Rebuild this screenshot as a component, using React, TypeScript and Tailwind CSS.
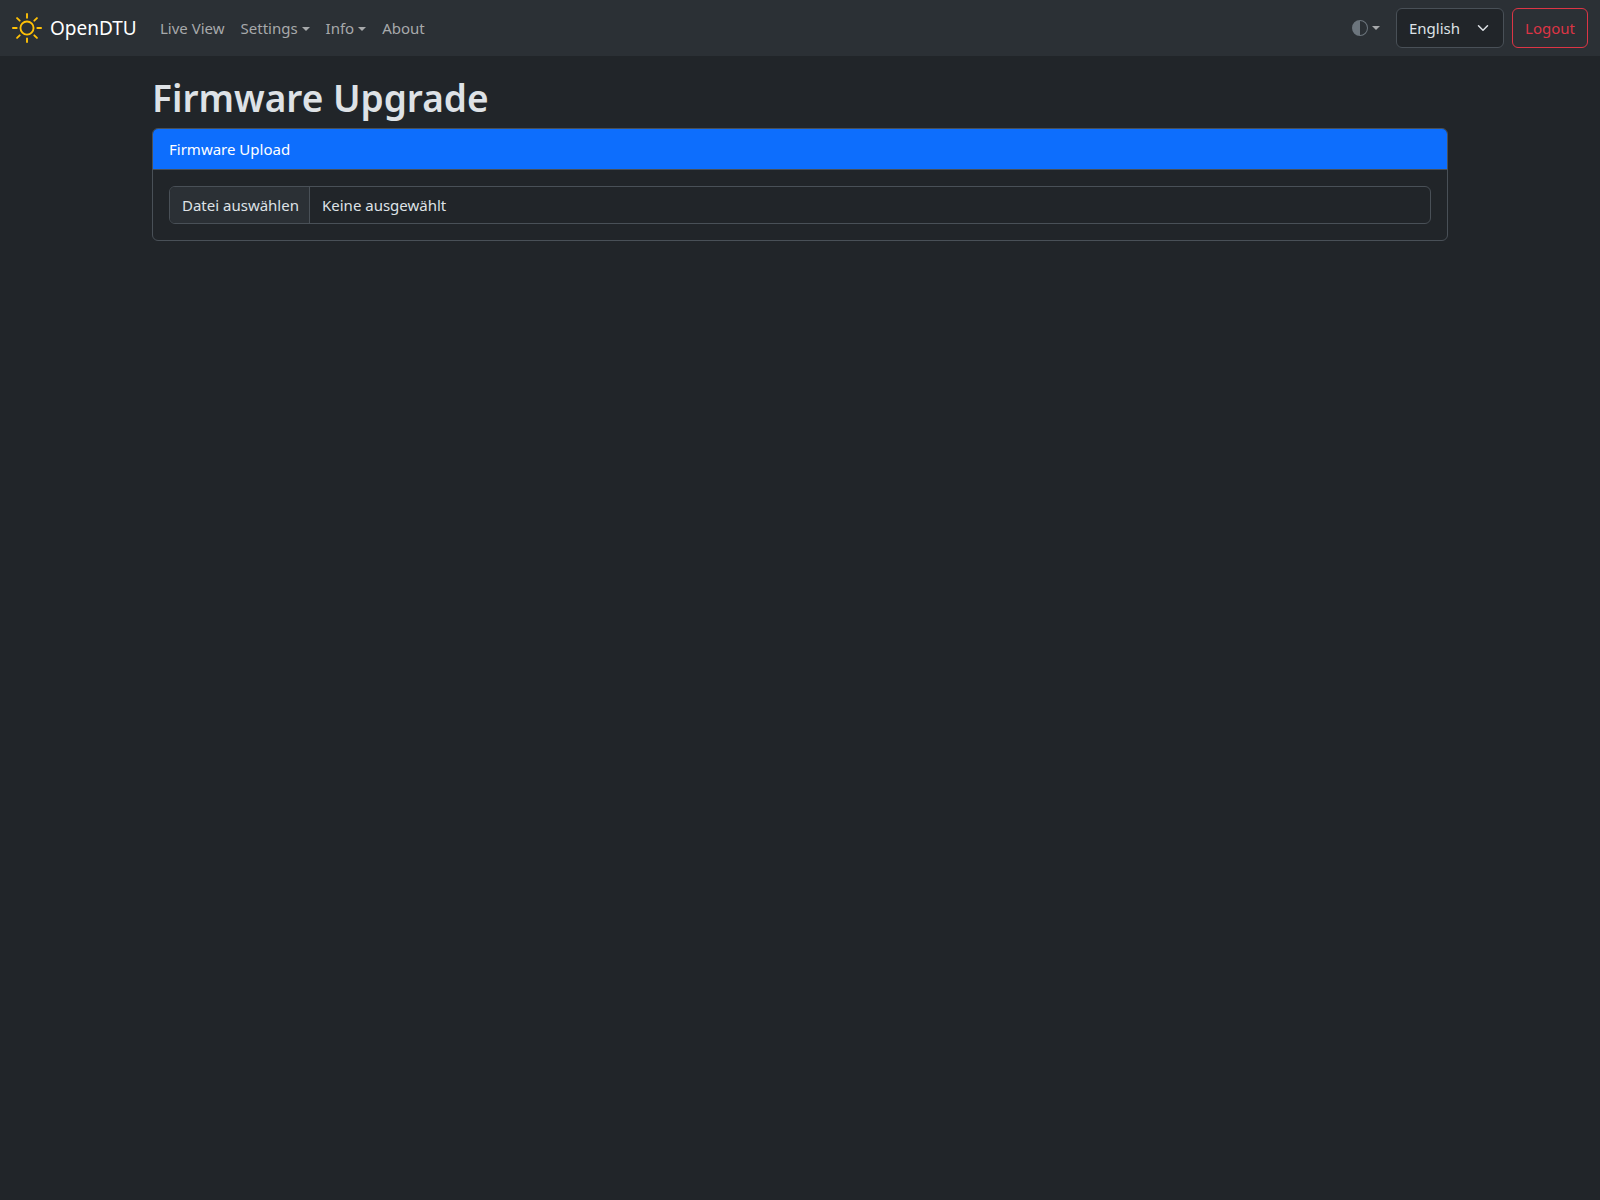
const Caret = () => (
  <span className="ml-[4px] inline-block h-0 w-0 border-x-[4.8px] border-t-[4.8px] border-x-transparent border-t-current align-[3px]" />
);

export default function App() {
  return (
    <div className="min-h-screen bg-[#212529] text-[15px] text-[#dee2e6] font-['Noto_Sans','Open_Sans',sans-serif]">
      <nav className="flex h-[56px] items-center bg-[#2b3035] px-3">
        <a className="mr-4 flex w-[124px] shrink-0 items-center whitespace-nowrap text-[19px] text-white">
          <svg viewBox="0 0 16 16" className="mr-[8px] h-[30px] w-[30px] shrink-0 fill-[#ffc107]">
            <path d="M8 11a3 3 0 1 1 0-6 3 3 0 0 1 0 6zm0 1a4 4 0 1 0 0-8 4 4 0 0 0 0 8zM8 0a.5.5 0 0 1 .5.5v2a.5.5 0 0 1-1 0v-2A.5.5 0 0 1 8 0zm0 13a.5.5 0 0 1 .5.5v2a.5.5 0 0 1-1 0v-2A.5.5 0 0 1 8 13zm8-5a.5.5 0 0 1-.5.5h-2a.5.5 0 0 1 0-1h2a.5.5 0 0 1 .5.5zM3 8a.5.5 0 0 1-.5.5h-2a.5.5 0 0 1 0-1h2A.5.5 0 0 1 3 8zm10.657-5.657a.5.5 0 0 1 0 .707l-1.414 1.415a.5.5 0 1 1-.707-.708l1.414-1.414a.5.5 0 0 1 .707 0zm-9.193 9.193a.5.5 0 0 1 0 .707L3.05 13.657a.5.5 0 0 1-.707-.707l1.414-1.414a.5.5 0 0 1 .707 0zm9.193 2.121a.5.5 0 0 1-.707 0l-1.414-1.414a.5.5 0 0 1 .707-.707l1.414 1.414a.5.5 0 0 1 0 .707zM4.464 4.465a.5.5 0 0 1-.707 0L2.343 3.05a.5.5 0 1 1 .707-.707l1.414 1.414a.5.5 0 0 1 0 .708z" />
          </svg>
          <span>OpenDTU</span>
        </a>
        <ul className="flex items-center text-[#a7a9ab]">
          <li className="p-2">Live View</li>
          <li className="p-2">Settings<Caret /></li>
          <li className="p-2">Info<Caret /></li>
          <li className="p-2">About</li>
        </ul>
        <div className="ml-auto flex items-center text-[#a7a9ab]">
          <button className="mr-2 flex items-center px-2 py-2 text-[#a7a9ab]">
            <svg viewBox="0 0 16 16" className="h-4 w-4 fill-[#6c757d]">
              <path d="M8 15A7 7 0 1 0 8 1v14zm0 1A8 8 0 1 1 8 0a8 8 0 0 1 0 16z" />
            </svg>
            <Caret />
          </button>
          <div className="mr-2 flex h-[40px] w-[108px] items-center justify-between rounded-md border border-[#495057] bg-[#212529] pl-3 pr-[14px] text-[#dee2e6]">
            <span>English</span>
            <svg viewBox="0 0 16 16" className="h-3 w-3 fill-none stroke-[#dee2e6]" strokeWidth="2" strokeLinecap="round" strokeLinejoin="round">
              <path d="m2 5 6 6 6-6" />
            </svg>
          </div>
          <button className="flex h-[40px] w-[76px] items-center justify-center rounded-md border border-[#dc3545] text-[#dc3545]">
            Logout
          </button>
        </div>
      </nav>
      <main className="mx-auto w-[1320px] px-3 pt-4">
        <h1 className="mb-2 h-[48px] text-[37px] font-semibold leading-[52px]">Firmware Upgrade</h1>
        <section className="overflow-hidden rounded-md border border-[#495057]">
          <header className="h-[41px] border-b border-[#495057] bg-[#0d6efd] px-4 py-2 leading-6 text-white">Firmware Upload</header>
          <div className="p-4">
            <div className="flex h-[38px] items-center overflow-hidden rounded-md border border-[#495057]">
              <span className="flex h-full w-[140px] items-center whitespace-nowrap border-r border-[#495057] bg-[#2b3035] pl-3">Datei auswählen</span>
              <span className="px-3">Keine ausgewählt</span>
            </div>
          </div>
        </section>
      </main>
    </div>
  );
}
